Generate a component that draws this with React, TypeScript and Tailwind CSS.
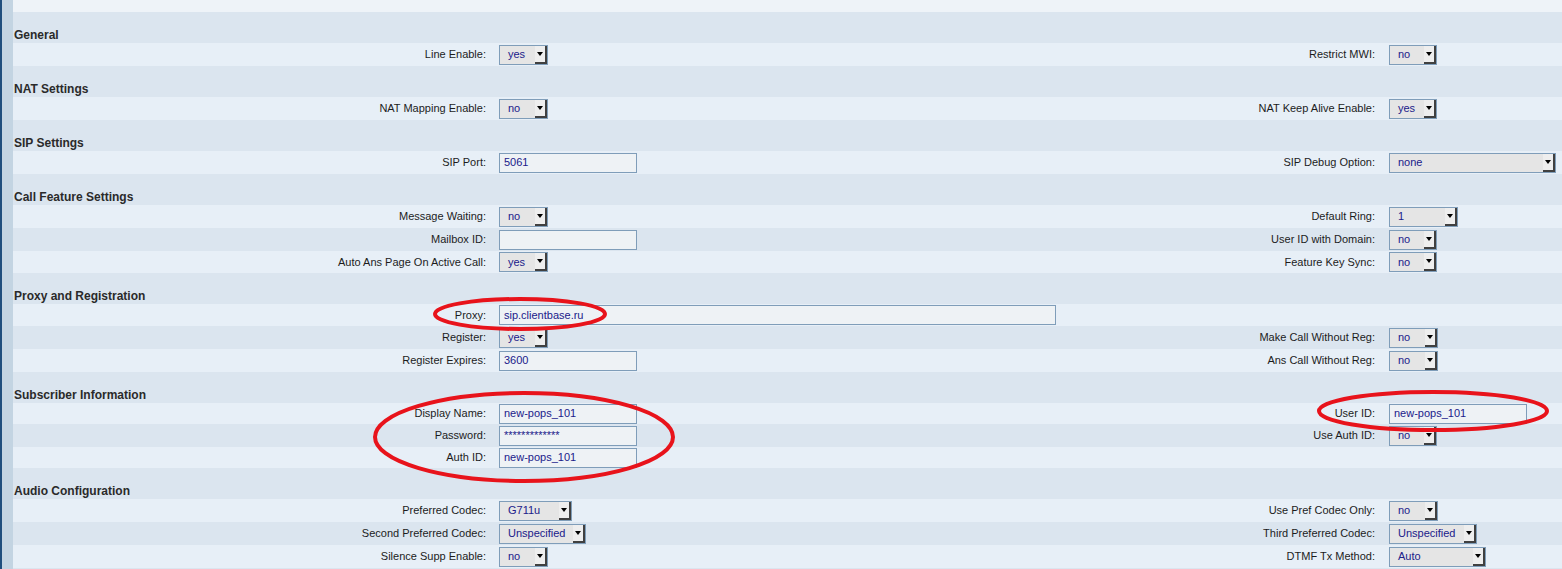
type Ctrl =
  | { kind: "select"; value: string; w: number }
  | { kind: "input"; value: string; w: number };

type Row = { h: number; l?: [string, Ctrl]; r?: [string, Ctrl] };
type Section = { title: string; h: number; rows: Row[] };

const sel = (value: string, w: number): Ctrl => ({ kind: "select", value, w });
const inp = (value: string, w: number): Ctrl => ({ kind: "input", value, w });

const sections: Section[] = [
  {
    title: "General",
    h: 31,
    rows: [{ h: 23, l: ["Line Enable:", sel("yes", 49)], r: ["Restrict MWI:", sel("no", 48)] }],
  },
  {
    title: "NAT Settings",
    h: 31,
    rows: [
      { h: 23, l: ["NAT Mapping Enable:", sel("no", 49)], r: ["NAT Keep Alive Enable:", sel("yes", 48)] },
    ],
  },
  {
    title: "SIP Settings",
    h: 31,
    rows: [{ h: 23, l: ["SIP Port:", inp("5061", 138)], r: ["SIP Debug Option:", sel("none", 167)] }],
  },
  {
    title: "Call Feature Settings",
    h: 31,
    rows: [
      { h: 23, l: ["Message Waiting:", sel("no", 49)], r: ["Default Ring:", sel("1", 69)] },
      { h: 23, l: ["Mailbox ID:", inp("", 138)], r: ["User ID with Domain:", sel("no", 48)] },
      { h: 22, l: ["Auto Ans Page On Active Call:", sel("yes", 49)], r: ["Feature Key Sync:", sel("no", 48)] },
    ],
  },
  {
    title: "Proxy and Registration",
    h: 31,
    rows: [
      { h: 22, l: ["Proxy:", inp("sip.clientbase.ru", 557)] },
      { h: 23, l: ["Register:", sel("yes", 49)], r: ["Make Call Without Reg:", sel("no", 49)] },
      { h: 23, l: ["Register Expires:", inp("3600", 138)], r: ["Ans Call Without Reg:", sel("no", 49)] },
    ],
  },
  {
    title: "Subscriber Information",
    h: 31,
    rows: [
      { h: 21, l: ["Display Name:", inp("new-pops_101", 138)], r: ["User ID:", inp("new-pops_101", 138)] },
      { h: 23, l: ["Password:", inp("*************", 138)], r: ["Use Auth ID:", sel("no", 48)] },
      { h: 21, l: ["Auth ID:", inp("new-pops_101", 138)] },
    ],
  },
  {
    title: "Audio Configuration",
    h: 31,
    rows: [
      { h: 23, l: ["Preferred Codec:", sel("G711u", 73)], r: ["Use Pref Codec Only:", sel("no", 49)] },
      { h: 23, l: ["Second Preferred Codec:", sel("Unspecified", 87)], r: ["Third Preferred Codec:", sel("Unspecified", 88)] },
      { h: 23, l: ["Silence Supp Enable:", sel("no", 49)], r: ["DTMF Tx Method:", sel("Auto", 97)] },
    ],
  },
];

function Control({ c }: { c: Ctrl }) {
  if (c.kind === "input") {
    return (
      <div
        className="flex h-[20px] items-center border border-[#7f9db9] bg-[#eef2f5] pl-[4px] text-[11px] text-[#20208a]"
        style={{ width: c.w }}
      >
        {c.value}
      </div>
    );
  }
  return (
    <div
      className="flex h-[20px] items-stretch border border-[#7f9db9] bg-[#e5e5e5] text-[11px] text-[#20208a]"
      style={{ width: c.w }}
    >
      <span className="flex flex-1 items-center pl-[8px]">{c.value}</span>
      <span className="flex w-[12px] items-center justify-center border-r-2 border-b-2 border-[#404040] bg-[#eeeeee]">
        <span className="h-0 w-0 border-l-[3px] border-r-[3px] border-t-[4px] border-l-transparent border-r-transparent border-t-black" />
      </span>
    </div>
  );
}

export default function App() {
  return (
    <div
      className="relative flex h-[569px] w-[1562px] overflow-hidden text-[#1c1c1c]"
      style={{ fontFamily: '"Liberation Sans", Arial, sans-serif' }}
    >
      <div className="w-[2px] bg-[#1f4e7d]" />
      <div className="w-[11px] bg-[#c3d4e2]" />
      <div className="flex flex-1 flex-col bg-[#dbe5ef]">
        <div className="h-[12px] bg-[#eef3f8]" />
        {sections.map((s) => (
          <div key={s.title} className="flex flex-col">
            <div
              className="flex items-end bg-[#dbe5ef] pb-[1px] pl-[1px] text-[12px] font-bold leading-[14px] text-[#2a2a2a]"
              style={{ height: s.h }}
            >
              {s.title}
            </div>
            {s.rows.map((r, i) => (
              <div
                key={i}
                className={`flex items-center text-[11px] ${i % 2 === 1 ? "bg-[#dbe5ef]" : "bg-[#e7eff7]"}`}
                style={{ height: r.h }}
              >
                <div className="w-[479px] pr-[6px] text-right">{r.l?.[0]}</div>
                <div className="w-[690px] pl-[7px]">{r.l && <Control c={r.l[1]} />}</div>
                <div className="w-[200px] pr-[7px] text-right">{r.r?.[0]}</div>
                <div className="flex-1 pl-[7px]">{r.r && <Control c={r.r[1]} />}</div>
              </div>
            ))}
          </div>
        ))}
      </div>
      <svg className="pointer-events-none absolute inset-0" width="1562" height="569">
        <ellipse cx="520" cy="314" rx="85" ry="15" fill="none" stroke="#e8131b" strokeWidth="4" />
        <ellipse cx="524" cy="437" rx="149" ry="44" fill="none" stroke="#e8131b" strokeWidth="4" />
        <ellipse cx="1433" cy="411" rx="114" ry="19" fill="none" stroke="#e8131b" strokeWidth="4" />
      </svg>
    </div>
  );
}
